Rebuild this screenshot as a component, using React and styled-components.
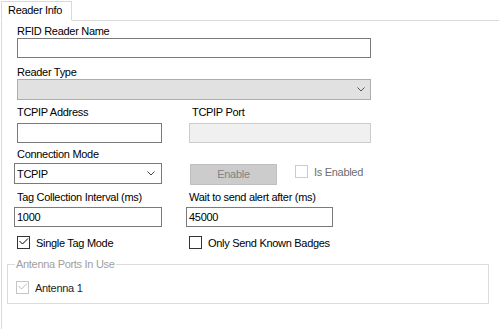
import styled, { createGlobalStyle } from "styled-components";

const GlobalStyle = createGlobalStyle`
  body {
    margin: 0;
    background: #fff;
    overflow: hidden;
    font-family: "Liberation Sans", Arial, sans-serif;
    font-size: 11px;
    letter-spacing: -0.3px;
    color: #000;
  }
`;

const Window = styled.div`
  padding: 1px 0 0 1px;
`;

const TabStrip = styled.div`
  display: flex;
`;

const Tab = styled.div`
  box-sizing: border-box;
  width: 71px;
  height: 20px;
  margin-bottom: -1px;
  padding: 2px 0 0 6px;
  line-height: 13px;
  border: 1px solid #d9d9d9;
  border-bottom-color: #fff;
  background: #fff;
  position: relative;
  z-index: 1;
`;

const Panel = styled.div`
  box-sizing: border-box;
  height: 320px;
  padding: 4px 0 0 12px;
  border-top: 1px solid #d9d9d9;
  border-left: 1px solid #d9d9d9;
`;

const Row = styled.div`
  display: flex;
  align-items: flex-start;
  margin-top: ${(p) => p.$mt || 0}px;
`;

const Field = styled.div`
  display: flex;
  flex-direction: column;
  width: ${(p) => p.$w}px;
  margin-left: ${(p) => p.$ml || 0}px;
`;

const Label = styled.div`
  height: 13px;
  line-height: 13px;
  white-space: nowrap;
  padding-left: ${(p) => p.$indent || 0}px;
  margin-bottom: ${(p) => p.$gap || 0}px;
`;

const TextBox = styled.div`
  box-sizing: border-box;
  height: 20px;
  padding: 0 2px;
  line-height: 18px;
  border: 1px solid ${(p) => (p.$disabled ? "#cccccc" : "#7a7a7a")};
  background: ${(p) => (p.$disabled ? "#f0f0f0" : "#fff")};
`;

const Combo = styled.div`
  box-sizing: border-box;
  height: 21px;
  display: flex;
  align-items: center;
  justify-content: space-between;
  padding: 0 ${(p) => (p.$flat ? 5 : 6)}px 0 2px;
  border: 1px solid ${(p) => (p.$flat ? "#adadad" : "#7a7a7a")};
  background: ${(p) => (p.$flat ? "#e1e1e1" : "#fff")};
`;

const Button = styled.div`
  box-sizing: border-box;
  width: 87px;
  height: 21px;
  margin: 16px 0 0 28px;
  line-height: 19px;
  text-align: center;
  color: #838383;
  background: #cccccc;
  border: 1px solid #bfbfbf;
`;

const CheckItem = styled.div`
  display: flex;
  align-items: center;
  gap: 6px;
  height: 13px;
  width: ${(p) => (p.$w ? `${p.$w}px` : "auto")};
  margin: ${(p) => p.$mt || 0}px 0 0 ${(p) => p.$ml || 0}px;
  color: ${(p) => p.$color || "#000"};
`;

const Box = styled.span`
  box-sizing: border-box;
  width: 13px;
  height: 13px;
  flex: none;
  display: flex;
  border: 1px solid ${(p) => p.$border};
  background: #fff;
  svg {
    display: block;
  }
`;

const Group = styled.fieldset`
  box-sizing: border-box;
  width: 482px;
  margin: 9px 0 0 -7px;
  padding: 10px 8px 9px 8px;
  border: 1px solid #dcdcdc;
  min-width: 0;

  legend {
    margin-left: -1px;
    padding: 0 1px;
    line-height: 13px;
    color: #a0a0a0;
  }
`;

function Chevron({ color }) {
  return (
    <svg width="8" height="5" viewBox="0 0 8 5">
      <path d="M0.5 0.5 L4 4 L7.5 0.5" fill="none" stroke={color} strokeWidth="1" />
    </svg>
  );
}

function CheckBox({ checked, border, mark, children, ...rest }) {
  return (
    <CheckItem {...rest}>
      <Box $border={border}>
        {checked && (
          <svg width="11" height="11" viewBox="0 0 11 11">
            <path d="M1.5 4 L4.5 7 L10 1.5" fill="none" stroke={mark} strokeWidth="1" />
          </svg>
        )}
      </Box>
      <span>{children}</span>
    </CheckItem>
  );
}

export default function App() {
  return (
    <Window>
      <GlobalStyle />
      <TabStrip>
        <Tab>Reader Info</Tab>
      </TabStrip>
      <Panel>
        <Row>
          <Field $w={354} $ml={3}>
            <Label>RFID Reader Name</Label>
            <TextBox />
          </Field>
        </Row>

        <Row $mt={8}>
          <Field $w={354} $ml={3}>
            <Label>Reader Type</Label>
            <Combo $flat>
              <span />
              <Chevron color="#555" />
            </Combo>
          </Field>
        </Row>

        <Row $mt={6}>
          <Field $w={145} $ml={3}>
            <Label $gap={4}>TCPIP Address</Label>
            <TextBox />
          </Field>
          <Field $w={182} $ml={27}>
            <Label $indent={3} $gap={4}>TCPIP Port</Label>
            <TextBox $disabled />
          </Field>
        </Row>

        <Row $mt={5}>
          <Field $w={148}>
            <Label $indent={3} $gap={2}>Connection Mode</Label>
            <Combo>
              <span>TCPIP</span>
              <Chevron color="#444" />
            </Combo>
          </Field>
          <Button>Enable</Button>
          <CheckBox $ml={18} $mt={17} $color="#6d6d6d" border="#cccccc">
            Is Enabled
          </CheckBox>
        </Row>

        <Row $mt={6}>
          <Field $w={148}>
            <Label $indent={3} $gap={3}>Tag Collection Interval (ms)</Label>
            <TextBox>1000</TextBox>
          </Field>
          <Field $w={147} $ml={24}>
            <Label $indent={3} $gap={3}>Wait to send alert after (ms)</Label>
            <TextBox>45000</TextBox>
          </Field>
        </Row>

        <Row $mt={9}>
          <CheckBox $ml={3} $w={172} checked border="#333" mark="#000">
            Single Tag Mode
          </CheckBox>
          <CheckBox border="#333">Only Send Known Badges</CheckBox>
        </Row>

        <Group>
          <legend>Antenna Ports In Use</legend>
          <CheckBox checked border="#c6c6c6" mark="#bcbcbc" $color="#1e1e1e">
            Antenna 1
          </CheckBox>
        </Group>
      </Panel>
    </Window>
  );
}
